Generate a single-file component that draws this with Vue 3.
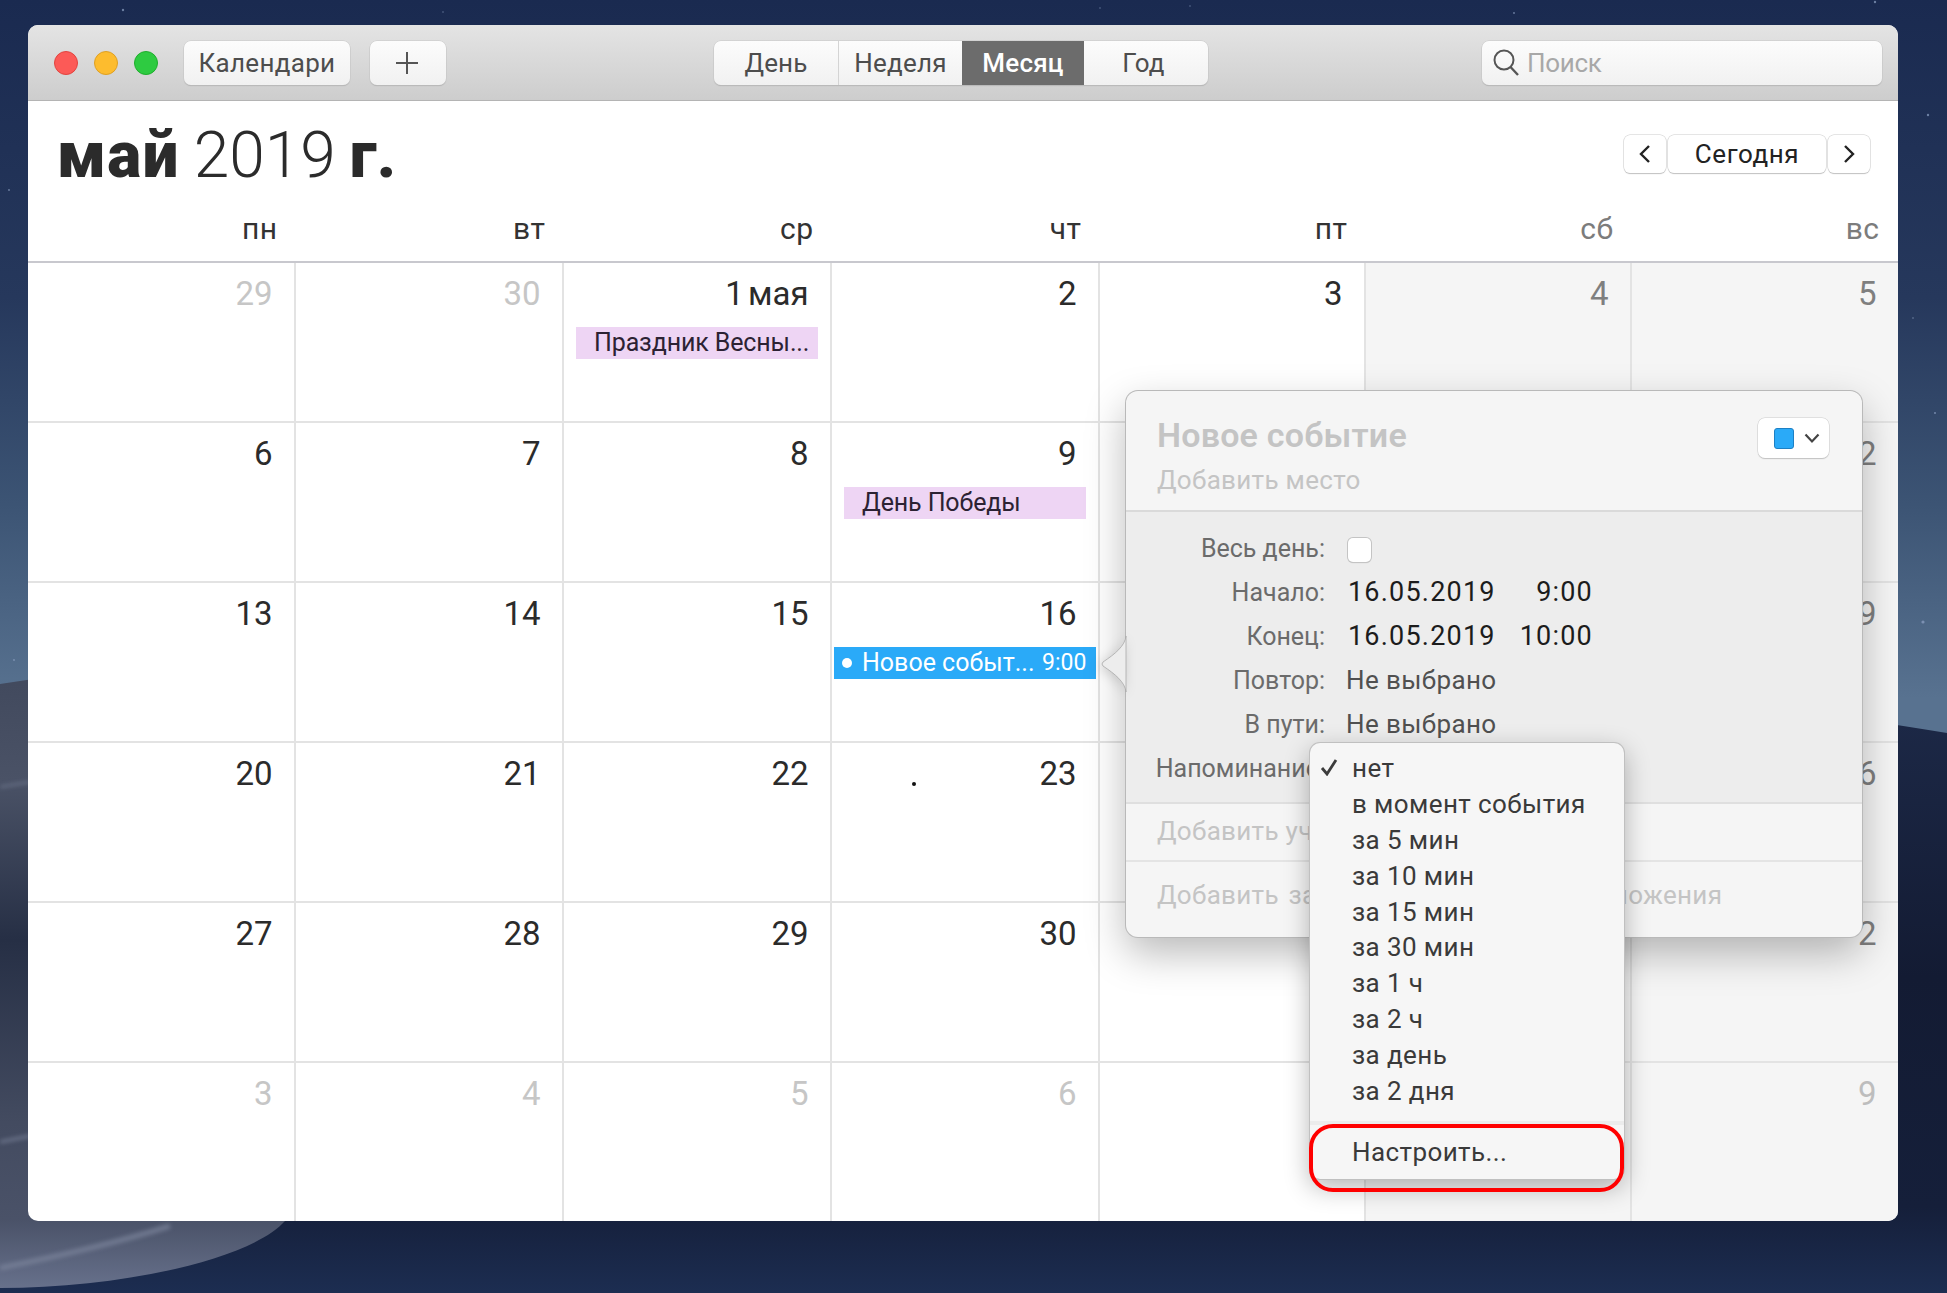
<script setup>
const weekdays = [
  { t: 'пн' }, { t: 'вт' }, { t: 'ср' }, { t: 'чт' }, { t: 'пт' }, { t: 'сб', w: true }, { t: 'вс', w: true }
]
const rows = [
  [['29', 1], ['30', 1], ['1 мая', 0, 'Праздник Весны...'], ['2'], ['3'], ['4', 2], ['5', 2]],
  [['6'], ['7'], ['8'], ['9', 0, 'День Победы'], [''], [''], ['12', 2]],
  [['13'], ['14'], ['15'], ['16', 0, null, true], [''], [''], ['19', 2]],
  [['20'], ['21'], ['22'], ['23', 0, null, false, true], [''], [''], ['26', 2]],
  [['27'], ['28'], ['29'], ['30'], [''], [''], ['2', 2]],
  [['3', 1], ['4', 1], ['5', 1], ['6', 1], [''], [''], ['9', 3]]
]
const cells = rows.flatMap((r, ri) =>
  r.map((c, ci) => ({
    key: ri + '-' + ci,
    num: c[0],
    tone: c[1] || 0,
    event: c[2],
    blue: c[3],
    dot: c[4],
    weekend: ci >= 5,
    last: ci === 6,
    lastRow: ri === 5
  }))
)
const stars = [
  [123, 10, 1.2], [1514, 13, 0.9], [1875, 2, 1.2], [1928, 115, 1.2], [1923, 622, 1.6], [1935, 413, 1],
  [1913, 318, 0.8], [9, 190, 0.9], [14, 660, 0.9], [443, 12, 0.7], [1100, 8, 0.7], [1190, 6, 0.7]
]
const menuItems = ['в момент события', 'за 5 мин', 'за 10 мин', 'за 15 мин', 'за 30 мин', 'за 1 ч', 'за 2 ч', 'за день', 'за 2 дня']
</script>

<template>
  <div class="desktop">
    <svg class="wallpaper" width="1947" height="1293" viewBox="0 0 1947 1293">
      <defs>
        <linearGradient id="sky" x1="0" y1="0" x2="0" y2="1">
          <stop offset="0" stop-color="#1a2a50" />
          <stop offset="0.23" stop-color="#26385c" />
          <stop offset="0.39" stop-color="#3c5474" />
          <stop offset="0.54" stop-color="#587290" />
          <stop offset="1" stop-color="#587290" />
        </linearGradient>
        <linearGradient id="duneLeft" gradientUnits="userSpaceOnUse" x1="0" y1="684" x2="0" y2="1293">
          <stop offset="0" stop-color="#424a5e" />
          <stop offset="0.16" stop-color="#4a5266" />
          <stop offset="0.42" stop-color="#262f45" />
          <stop offset="0.72" stop-color="#434b60" />
          <stop offset="0.88" stop-color="#4a5268" />
          <stop offset="1" stop-color="#69738e" />
        </linearGradient>
        <linearGradient id="duneDark" gradientUnits="userSpaceOnUse" x1="0" y1="720" x2="0" y2="1293">
          <stop offset="0" stop-color="#1c2846" />
          <stop offset="0.45" stop-color="#131b33" />
          <stop offset="0.85" stop-color="#151f3a" />
          <stop offset="1" stop-color="#1c2d51" />
        </linearGradient>
        <filter id="soft"><feGaussianBlur stdDeviation="2" /></filter>
      </defs>
      <rect width="1947" height="1293" fill="url(#sky)" />
      <circle v-for="(s, i) in stars" :key="i" :cx="s[0]" :cy="s[1]" :r="s[2]" fill="#8ea3c4" opacity="0.7" />
      <path d="M0 690 C500 640 1400 640 1947 733 V1293 H0 Z" fill="url(#duneDark)" />
      <path d="M0 684 L80 672 V1200 L285 1221 C250 1260 120 1288 0 1288 Z" fill="url(#duneLeft)" />
      <g fill="none" stroke="#7b849b" filter="url(#soft)" opacity="0.75">
        <path d="M0 787 L30 782" stroke-width="2" />
        <path d="M0 1142 L30 1136" stroke-width="3" />
        <path d="M0 1268 C50 1258 110 1245 170 1226" stroke-width="5" />
      </g>
    </svg>

    <div class="window">
      <header class="titlebar">
        <div class="lights">
          <span class="light red"></span>
          <span class="light yellow"></span>
          <span class="light green"></span>
        </div>
        <button class="tool-btn calendars">Календари</button>
        <button class="tool-btn add">
          <svg width="22" height="22" viewBox="0 0 22 22"><path d="M11 0V22M0 11H22" stroke="#555" stroke-width="2" fill="none" /></svg>
        </button>
        <div class="segments">
          <span class="seg s1">День</span>
          <span class="seg s2">Неделя</span>
          <span class="seg s3 active">Месяц</span>
          <span class="seg s4">Год</span>
        </div>
        <div class="search">
          <svg width="26" height="28" viewBox="0 0 26 28"><circle cx="11" cy="11" r="9.5" stroke="#555" stroke-width="2" fill="none" /><path d="M17.5 18L25 26" stroke="#555" stroke-width="2.4" fill="none" /></svg>
          <span>Поиск</span>
        </div>
      </header>

      <div class="headline">
        <h1 class="title"><b class="month">май</b> 2019 <b>г.</b></h1>
        <div class="nav">
          <button class="nav-btn arrow">
            <svg width="12" height="20" viewBox="0 0 12 20"><path d="M10 2L2 10L10 18" stroke="#222" stroke-width="2.4" fill="none" /></svg>
          </button>
          <button class="nav-btn today">Сегодня</button>
          <button class="nav-btn arrow">
            <svg width="12" height="20" viewBox="0 0 12 20"><path d="M2 2L10 10L2 18" stroke="#222" stroke-width="2.4" fill="none" /></svg>
          </button>
        </div>
      </div>

      <div class="weekdays">
        <div v-for="d in weekdays" :key="d.t" class="weekday" :class="{ weekend: d.w }">{{ d.t }}</div>
      </div>

      <div class="grid">
        <div
          v-for="c in cells"
          :key="c.key"
          class="cell"
          :class="{ weekend: c.weekend, last: c.last, lastRow: c.lastRow }"
        >
          <div class="num" :class="'tone' + c.tone">{{ c.num }}</div>
          <div v-if="c.event" class="event">{{ c.event }}</div>
          <div v-if="c.blue" class="event-blue">
            <i class="dot"></i>
            <span class="ev-name">Новое событ...</span>
            <span class="ev-time">9:00</span>
          </div>
          <i v-if="c.dot" class="speck"></i>
        </div>
      </div>

      <div class="popover">
        <svg class="pointer" width="26" height="56" viewBox="0 0 26 56">
          <path d="M25 0 C24 10 14 18 2 26 Q0 28 2 30 C14 38 24 46 25 56 Z" fill="#ededed" stroke="#a8a8a8" stroke-width="0.8" />
        </svg>
        <div class="pop-head">
          <div>
            <div class="pop-title">Новое событие</div>
            <div class="pop-place">Добавить место</div>
          </div>
          <div class="color-btn">
            <span class="swatch"></span>
            <svg width="16" height="11" viewBox="0 0 16 11"><path d="M1.5 1.5L8 8.5L14.5 1.5" stroke="#444" stroke-width="2.2" fill="none" /></svg>
          </div>
        </div>
        <div class="pop-body">
          <div class="row"><span class="lbl">Весь день:</span><span class="check"></span></div>
          <div class="row"><span class="lbl">Начало:</span><span class="val date">16.05.2019</span><span class="val time">9:00</span></div>
          <div class="row"><span class="lbl">Конец:</span><span class="val date">16.05.2019</span><span class="val time">10:00</span></div>
          <div class="row"><span class="lbl">Повтор:</span><span class="sel">Не выбрано</span></div>
          <div class="row"><span class="lbl">В пути:</span><span class="sel">Не выбрано</span></div>
          <div class="row"><span class="lbl">Напоминание:</span></div>
        </div>
        <div class="pop-foot invitees">Добавить участников</div>
        <div class="pop-foot notes">Добавить заметку, URL-адрес или вложения</div>
      </div>

      <div class="menu">
        <div class="item">
          <svg class="tick" width="18" height="18" viewBox="0 0 18 18"><path d="M2 10L7 16L16 2" stroke="#3c3c3c" stroke-width="2.8" fill="none" /></svg>
          нет
        </div>
        <div v-for="m in menuItems" :key="m" class="item">{{ m }}</div>
        <div class="sep"></div>
        <div class="item">Настроить...</div>
      </div>
      <div class="callout"></div>
    </div>
  </div>
</template>

<style>
html, body { margin: 0; height: 1293px; overflow: hidden; background: #1a2a4e; }
</style>

<style scoped>
.desktop {
  position: relative;
  width: 1947px;
  height: 1293px;
  box-sizing: border-box;
  padding: 25px 0 0 28px;
  font-family: Roboto, "Liberation Sans", sans-serif;
  overflow: hidden;
}
.wallpaper { position: absolute; left: 0; top: 0; }
.window {
  position: relative;
  width: 1870px;
  height: 1196px;
  background: #fff;
  border-radius: 10px;
  overflow: hidden;
}
.titlebar {
  height: 76px;
  box-sizing: border-box;
  display: flex;
  align-items: center;
  background: linear-gradient(#e4e4e4, #cdcdcd);
  border-bottom: 1px solid #b4b4b4;
  padding: 0 16px 0 26px;
}
.lights { display: flex; gap: 16px; width: 130px; flex: none; }
.light { width: 24px; height: 24px; border-radius: 50%; box-sizing: border-box; }
.red { background: #fc5a57; border: 1px solid #e2443f; }
.yellow { background: #fdbc2e; border: 1px solid #dfa023; }
.green { background: #2ecb41; border: 1px solid #1fae2d; }
.tool-btn, .seg, .search {
  font: inherit;
  font-size: 26px;
  color: #4d4d4d;
}
.tool-btn {
  height: 44px;
  padding: 0;
  border: 0;
  border-radius: 7px;
  background: linear-gradient(#fcfcfc, #f1f1f1);
  box-shadow: 0 0 0 0.5px #c6c6c6, 0 1px 1px #aaa;
  display: flex;
  align-items: center;
  justify-content: center;
}
.calendars { width: 166px; letter-spacing: 0.3px; }
.add { width: 76px; margin-left: 20px; padding-right: 2px; }
.segments {
  margin-left: 268px;
  height: 44px;
  display: flex;
  border-radius: 7px;
  overflow: hidden;
  background: linear-gradient(#fcfcfc, #f1f1f1);
  box-shadow: 0 0 0 0.5px #c6c6c6, 0 1px 1px #aaa;
}
.seg { display: flex; align-items: center; justify-content: center; box-sizing: border-box; letter-spacing: 0.2px; }
.s1 { width: 125px; border-right: 1px solid #d4d4d4; }
.s2 { width: 123px; }
.s3 { width: 122px; }
.s4 { width: 124px; padding-right: 5px; }
.active { background: #6c6c6c; color: #fff; font-weight: 500; }
.search {
  margin-left: 274px;
  width: 400px;
  height: 44px;
  box-sizing: border-box;
  padding-left: 11px;
  display: flex;
  align-items: center;
  gap: 8px;
  color: #a8a8a8;
  letter-spacing: -0.3px;
  border-radius: 7px;
  background: linear-gradient(#fcfcfc, #f1f1f1);
  box-shadow: 0 0 0 0.5px #c6c6c6, 0 1px 1px #aaa;
}
.headline {
  height: 90px;
  display: flex;
  justify-content: space-between;
  align-items: flex-start;
  box-sizing: border-box;
  padding: 34px 28px 0 29px;
}
.title {
  margin: -19px 0 0;
  font-size: 64px;
  line-height: 80px;
  font-weight: 300;
  word-spacing: -1.5px;
  color: #2b2b2b;
}
.title b { font-weight: 900; }
.title .month { letter-spacing: 1.2px; }
.nav { display: flex; gap: 2px; }
.nav-btn {
  font: inherit;
  font-size: 26px;
  color: #222;
  height: 38px;
  padding: 0;
  border: 0;
  border-radius: 6px;
  background: #fff;
  box-shadow: 0 0 0 0.5px #ccc, 0 1px 1px #bbb;
  display: flex;
  align-items: center;
  justify-content: center;
}
.arrow { width: 42px; }
.today { width: 158px; letter-spacing: 0.6px; }
.weekdays, .grid {
  display: grid;
  grid-template-columns: 268px 268px 268px 268px 266px 266px 266px;
}
.weekdays { height: 72px; border-bottom: 2px solid #c8c8ce; box-sizing: border-box; }
.weekday {
  text-align: right;
  padding: 20px 18.5px 0 0;
  font-size: 30px;
  line-height: 36px;
  letter-spacing: 0.5px;
  color: #333;
}
.weekday.weekend { color: #7c7c7c; }
.grid { grid-template-rows: repeat(5, 160px) 158px; }
.cell {
  position: relative;
  box-sizing: border-box;
  border-right: 2px solid #e3e3e3;
  border-bottom: 2px solid #e3e3e3;
}
.cell.weekend { background: #f5f5f5; }
.cell.last { border-right: 0; }
.cell.lastRow { border-bottom: 0; }
.num {
  height: 40px;
  text-align: right;
  padding: 11px 21.5px 0 0;
  font-size: 33px;
  line-height: 40px;
  word-spacing: -4px;
  color: #2b2b2b;
}
.tone1 { color: #c6c6c6; }
.tone2 { color: #7f7f7f; }
.tone3 { color: #bdbdbd; }
.event {
  margin: 13px 12px 0 12px;
  height: 32px;
  line-height: 32px;
  padding-left: 18px;
  font-size: 25px;
  letter-spacing: -0.12px;
  white-space: nowrap;
  background: #eed5f4;
  color: #2c2233;
}
.event-blue {
  margin: 13px 2px 0 2px;
  height: 32px;
  padding-bottom: 1px;
  box-sizing: border-box;
  background: #2aaaf8;
  color: #fff;
  display: flex;
  align-items: center;
  white-space: nowrap;
}
.dot { width: 10px; height: 10px; border-radius: 50%; background: #fff; margin-left: 8px; }
.ev-name { margin-left: 10px; font-size: 25px; width: 180px; }
.ev-time { font-size: 23px; }
.speck {
  position: absolute;
  left: 80px;
  top: 39px;
  width: 4px;
  height: 4px;
  border-radius: 50%;
  background: #111;
}
.popover {
  position: absolute;
  left: 1098px;
  top: 366px;
  width: 736px;
  height: 546px;
  box-sizing: border-box;
  background: #f5f5f5;
  border-radius: 12px;
  box-shadow: 0 0 0 1px #b9b9b9, 0 16px 40px rgba(0, 0, 0, 0.28);
}
.pointer { position: absolute; left: -25px; top: 245px; filter: drop-shadow(-2px 2px 6px rgba(0, 0, 0, 0.16)); }
.pop-head {
  height: 121px;
  box-sizing: border-box;
  display: flex;
  justify-content: space-between;
  padding: 23px 33px 0 31px;
  border-bottom: 2px solid #dadada;
}
.pop-title { font-size: 34px; line-height: 42px; font-weight: 600; letter-spacing: 0.2px; color: #c4c4c4; }
.pop-place { font-size: 26px; line-height: 36px; margin-top: 6px; letter-spacing: 0.3px; color: #c4c4c4; }
.color-btn {
  width: 71px;
  height: 40px;
  margin-top: 4px;
  border-radius: 7px;
  background: #fff;
  box-shadow: 0 0 0 0.5px #ccc, 0 1px 1px #bbb;
  display: flex;
  align-items: center;
  gap: 10px;
  padding-left: 16px;
  box-sizing: border-box;
}
.swatch {
  width: 20px;
  height: 21px;
  box-sizing: border-box;
  border-radius: 3px;
  background: #2aaaf8;
  border: 1.5px solid #1d80c4;
}
.pop-body {
  height: 292px;
  box-sizing: border-box;
  padding-top: 14px;
  background: #ededed;
  border-bottom: 2px solid #dfdfdf;
}
.row {
  height: 44px;
  display: flex;
  align-items: center;
  font-size: 25px;
}
.lbl {
  width: 199px;
  flex: none;
  text-align: right;
  white-space: nowrap;
  color: #6b6b6b;
}
.check {
  width: 23px;
  height: 24px;
  margin: 3px 0 0 23px;
  box-sizing: border-box;
  border-radius: 5px;
  background: #fff;
  box-shadow: 0 0 0 1px #c4c4c4, 0 1px 1px #bbb;
}
.val { font-size: 27px; letter-spacing: 1.2px; color: #1c1c1c; }
.date { margin-left: 23px; width: 148px; }
.time { width: 97px; text-align: right; }
.sel { margin-left: 21px; font-size: 26px; letter-spacing: 0.4px; color: #505050; }
.pop-foot {
  box-sizing: border-box;
  padding-left: 31px;
  font-size: 26px;
  letter-spacing: 0.3px;
  color: #c4c4c4;
  white-space: nowrap;
}
.invitees { height: 58px; line-height: 54px; border-bottom: 2px solid #e4e4e4; }
.notes { height: 74px; line-height: 66px; word-spacing: 3px; }
.menu {
  position: absolute;
  left: 1282px;
  top: 718px;
  width: 314px;
  height: 436px;
  box-sizing: border-box;
  padding-top: 7px;
  background: #f6f6f6;
  border-radius: 10px;
  box-shadow: 0 0 0 1px #c0c0c0, 0 8px 26px rgba(0, 0, 0, 0.3);
}
.item {
  position: relative;
  height: 35.9px;
  line-height: 36px;
  padding-left: 42px;
  font-size: 26px;
  letter-spacing: 0.4px;
  color: #3a3a3a;
  white-space: nowrap;
}
.tick { position: absolute; left: 10px; top: 8px; }
.sep { height: 4px; margin: 12px 0 9px; background: #ececec; }
.callout {
  position: absolute;
  left: 1281px;
  top: 1099px;
  width: 315px;
  height: 68px;
  box-sizing: border-box;
  border: 4px solid #f00;
  border-radius: 24px;
}
</style>
